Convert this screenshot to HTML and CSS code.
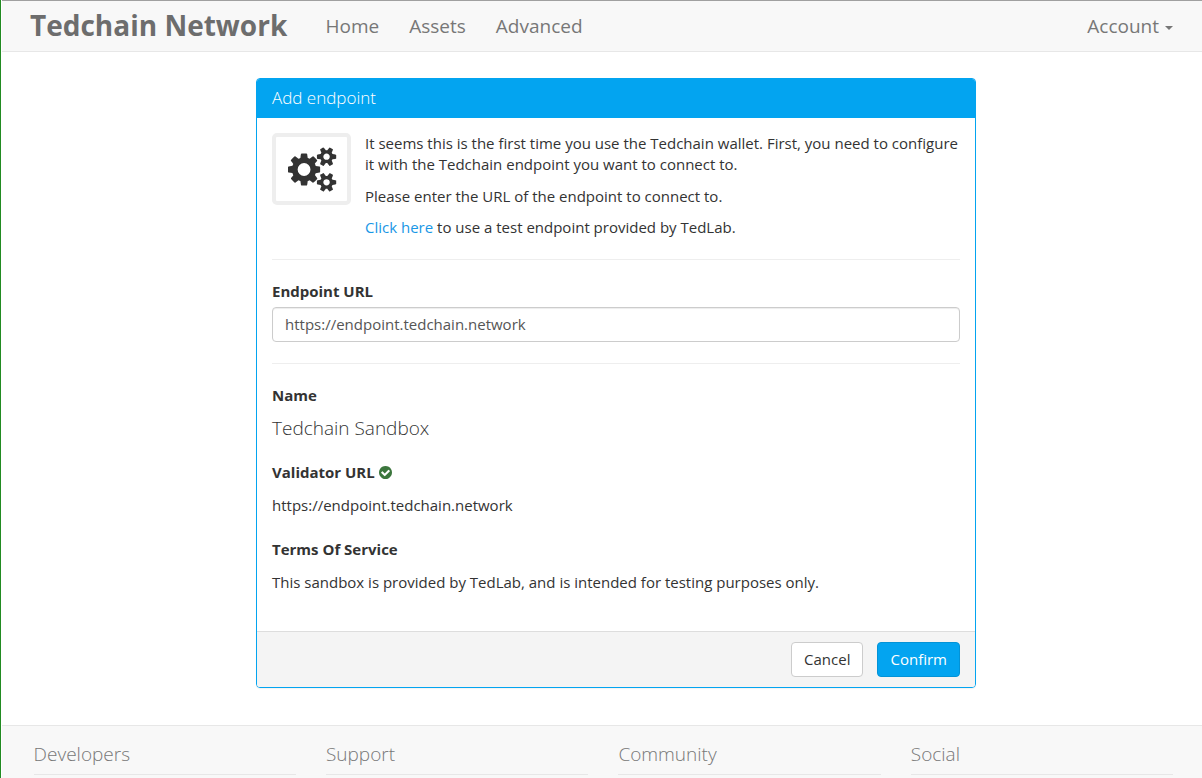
FILE: index.html
```html
<!DOCTYPE html>
<html lang="en">
<head>
<meta charset="utf-8">
<title>Tedchain Network</title>
<link rel="stylesheet" href="styles.css">
</head>
<body>
<div class="page">
  <nav class="navbar">
    <a class="brand">Tedchain Network</a>
    <div class="nav-links">
      <a>Home</a>
      <a>Assets</a>
      <a>Advanced</a>
    </div>
    <a class="account">Account<span class="caret"></span></a>
  </nav>

  <main class="panel">
    <header class="panel-heading">Add endpoint</header>
    <div class="panel-body">
      <section class="intro">
        <div class="icon-box">
          <svg class="cogs" viewBox="0 0 1920 1792"><path d="M896 896q0-106-75-181t-181-75-181 75-75 181 75 181 181 75 181-75 75-181zm768 512q0-52-38-90t-90-38-90 38-38 90q0 53 37.5 90.5t90.5 37.5 90.5-37.5 37.5-90.5zm0-1024q0-52-38-90t-90-38-90 38-38 90q0 53 37.5 90.5t90.5 37.5 90.5-37.5 37.5-90.5zm-384 421v185q0 10-7 19.5t-16 10.5l-155 24q-11 35-32 76 34 48 90 115 7 11 7 20 0 12-7 19-23 30-82.5 89.5t-78.5 59.5q-11 0-21-7l-115-90q-37 19-77 31-11 108-23 155-7 24-30 24h-186q-11 0-20-7.5t-10-17.5l-23-153q-34-10-75-31l-118 89q-7 7-20 7-11 0-21-8-144-133-144-160 0-9 7-19 10-14 41-53t47-61q-23-44-35-82l-152-24q-10-1-17-9.5t-7-19.5v-185q0-10 7-19.5t16-10.5l155-24q11-35 32-76-34-48-90-115-7-11-7-20 0-12 7-20 22-30 82-89t79-59q11 0 21 7l115 90q34-18 77-32 11-108 23-154 7-24 30-24h186q11 0 20 7.5t10 17.5l23 153q34 10 75 31l118-89q8-7 20-7 11 0 21 8 144 133 144 160 0 8-7 19-12 16-42 54t-45 60q23 48 34 82l152 23q10 2 17 10.5t7 19.5zm640 533v140q0 16-149 31-12 27-30 52 51 113 51 138 0 4-4 7-122 71-124 71-8 0-46-47t-52-68q-20 2-30 2t-30-2q-14 21-52 68t-46 47q-2 0-124-71-4-3-4-7 0-25 51-138-18-25-30-52-149-15-149-31v-140q0-16 149-31 13-29 30-52-51-113-51-138 0-4 4-7 4-2 35-20t59-34 30-16q8 0 46 46.5t52 67.5q20-2 30-2t30 2q51-71 92-112l6-2q4 0 124 70 4 3 4 7 0 25-51 138 17 23 30 52 149 15 149 31zm0-1024v140q0 16-149 31-12 27-30 52 51 113 51 138 0 4-4 7-122 71-124 71-8 0-46-47t-52-68q-20 2-30 2t-30-2q-14 21-52 68t-46 47q-2 0-124-71-4-3-4-7 0-25 51-138-18-25-30-52-149-15-149-31v-140q0-16 149-31 13-29 30-52-51-113-51-138 0-4 4-7 4-2 35-20t59-34 30-16q8 0 46 46.5t52 67.5q20-2 30-2t30 2q51-71 92-112l6-2q4 0 124 70 4 3 4 7 0 25-51 138 17 23 30 52 149 15 149 31z"/></svg>
        </div>
        <div class="intro-text">
          <p>It seems this is the first time you use the Tedchain wallet. First, you need to configure it with the Tedchain endpoint you want to connect to.</p>
          <p>Please enter the URL of the endpoint to connect to.</p>
          <p><a class="link">Click here</a> to use a test endpoint provided by TedLab.</p>
        </div>
      </section>
      <hr>
      <label class="label" for="endpoint">Endpoint URL</label>
      <input class="field" id="endpoint" type="text" value="https://endpoint.tedchain.network" spellcheck="false">
      <hr>
      <div class="label">Name</div>
      <p class="value lead">Tedchain Sandbox</p>
      <div class="label">Validator URL <svg class="check" viewBox="128 128 1536 1536"><path d="M1412 734q0-28-18-46l-91-90q-19-19-45-19t-45 19l-408 407-226-226q-19-19-45-19t-45 19l-91 90q-18 18-18 46 0 27 18 45l362 362q19 19 45 19 27 0 46-19l543-543q18-18 18-45zm252 162q0 209-103 385.5t-279.5 279.5-385.5 103-385.5-103-279.5-279.5-103-385.5 103-385.5 279.5-279.5 385.5-103 385.5 103 279.5 279.5 103 385.5z"/></svg></div>
      <p class="value">https://endpoint.tedchain.network</p>
      <div class="label">Terms Of Service</div>
      <p class="value">This sandbox is provided by TedLab, and is intended for testing purposes only.</p>
    </div>
    <footer class="panel-footer">
      <button class="btn">Cancel</button>
      <button class="btn primary">Confirm</button>
    </footer>
  </main>

  <footer class="site-footer">
    <h4>Developers</h4>
    <h4>Support</h4>
    <h4>Community</h4>
    <h4>Social</h4>
  </footer>
</div>
</body>
</html>
```

FILE: styles.css
```css
* { box-sizing: border-box; }
body {
  margin: 0;
  font: 15px/21px "Open Sans", sans-serif;
  color: #333;
  background: #fff;
}
.page {
  height: 778px;
  overflow: hidden;
  display: flex;
  flex-direction: column;
  border-left: 1px solid #228b22;
}
.navbar {
  flex: none;
  height: 52px;
  display: flex;
  align-items: center;
  padding: 0 29px 0 28px;
  margin-left: 1px;
  background: #f8f8f8;
  border-top: 1px solid #a0a0a0;
  border-bottom: 1px solid #e7e7e7;
  font-size: 19px;
  color: #777;
}
.brand {
  width: 295.5px;
  padding-bottom: 1px;
  font-size: 28px;
  font-weight: 700;
  color: #6d6d6d;
  white-space: nowrap;
}
.nav-links { display: flex; gap: 30px; flex: 1; }
.account { display: flex; align-items: center; }
.caret {
  margin: 3px 0 0 6px;
  border: 4px solid transparent;
  border-top-color: #777;
  border-bottom: 0;
}
.panel {
  flex: none;
  width: 720px;
  height: 610px;
  margin: 26px 0 0 255px;
  display: flex;
  flex-direction: column;
  border: 1px solid #03a4f0;
  border-radius: 4px;
  overflow: hidden;
  box-shadow: 0 1px 1px rgba(0, 0, 0, .05);
}
.panel-heading {
  height: 39px;
  padding: 8px 15px;
  background: #03a4f0;
  color: #fff;
  font-size: 17px;
  font-weight: 300;
}
.panel-body { flex: 1; padding: 15px; }
.intro { display: flex; gap: 14px; align-items: flex-start; }
.icon-box {
  flex: none;
  width: 79px;
  height: 72px;
  display: flex;
  align-items: center;
  justify-content: center;
  padding: 1px 0 0 1px;
  border: 4px solid #eee;
  border-radius: 5px;
}
.cogs { width: 48.2px; height: 45px; fill: #333; overflow: visible; }
.intro-text { margin-right: -6px; }
p { margin: 0 0 10.5px; }
.link { color: #1997e6; }
hr {
  margin: 21px 0;
  border: 0;
  border-top: 1px solid #eee;
}
.intro + hr { margin-top: 10px; }
.label { display: block; font-weight: 700; margin-bottom: 5px; }
.field {
  display: block;
  width: 100%;
  height: 35px;
  padding: 6px 12px;
  border: 1px solid #ccc;
  border-radius: 4px;
  box-shadow: inset 0 1px 1px rgba(0, 0, 0, .075);
  font: inherit;
  color: #555;
}
.value { min-height: 36px; padding-top: 7px; margin-bottom: 15px; }
.lead { font-size: 19px; font-weight: 300; }
.check { width: 13px; height: 13px; vertical-align: -1px; fill: #3c763d; }
.panel-footer {
  height: 56px;
  display: flex;
  justify-content: flex-end;
  gap: 14px;
  padding: 10px 15px;
  background: #f4f4f4;
  border-top: 1px solid #ddd;
}
.btn {
  height: 35px;
  padding: 0 12px;
  border: 1px solid #ccc;
  border-radius: 4px;
  background: #fff;
  font: inherit;
  color: #333;
}
.primary { background: #03a4f0; border-color: #0393d7; color: #fff; }
.site-footer {
  flex: none;
  height: 80px;
  display: grid;
  grid-template-columns: repeat(4, 262.4px);
  column-gap: 30px;
  margin: 37px 0 0 1px;
  padding: 16px 0 0 31.6px;
  background: #f8f8f8;
  border-top: 1px solid #e7e7e7;
  color: #777;
}
h4 {
  margin: 0;
  height: 33px;
  font-size: 19px;
  line-height: 25px;
  font-weight: 300;
  border-bottom: 1px solid #e7e7e7;
}
```
